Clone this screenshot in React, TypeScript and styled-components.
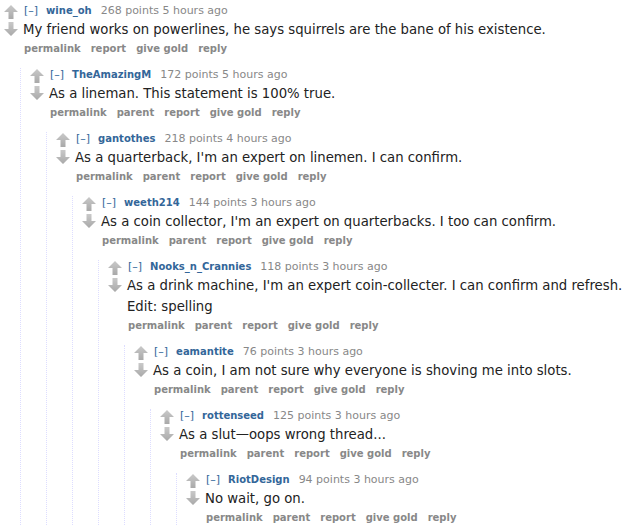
import React from "react";
import styled, { createGlobalStyle } from "styled-components";

const Global = createGlobalStyle`
  html, body { margin: 0; padding: 0; background: #fff; }
  body { font-family: "DejaVu Sans", Verdana, sans-serif; }
`;

type C = {
  author: string;
  points: number;
  age: string;
  body: string[];
  parent: boolean;
  child?: C;
};

const data: C = {
  author: "wine_oh",
  points: 268,
  age: "5 hours ago",
  body: ["My friend works on powerlines, he says squirrels are the bane of his existence."],
  parent: false,
  child: {
    author: "TheAmazingM",
    points: 172,
    age: "5 hours ago",
    body: ["As a lineman. This statement is 100% true."],
    parent: true,
    child: {
      author: "gantothes",
      points: 218,
      age: "4 hours ago",
      body: ["As a quarterback, I'm an expert on linemen. I can confirm."],
      parent: true,
      child: {
        author: "weeth214",
        points: 144,
        age: "3 hours ago",
        body: ["As a coin collector, I'm an expert on quarterbacks. I too can confirm."],
        parent: true,
        child: {
          author: "Nooks_n_Crannies",
          points: 118,
          age: "3 hours ago",
          body: [
            "As a drink machine, I'm an expert coin-collecter. I can confirm and refresh.",
            "Edit: spelling",
          ],
          parent: true,
          child: {
            author: "eamantite",
            points: 76,
            age: "3 hours ago",
            body: ["As a coin, I am not sure why everyone is shoving me into slots."],
            parent: true,
            child: {
              author: "rottenseed",
              points: 125,
              age: "3 hours ago",
              body: ["As a slut\u2014oops wrong thread..."],
              parent: true,
              child: {
                author: "RiotDesign",
                points: 94,
                age: "3 hours ago",
                body: ["No wait, go on."],
                parent: true,
              },
            },
          },
        },
      },
    },
  },
};

const Page = styled.div`
  padding-top: 4px;
  overflow: hidden;
  height: 526px;
`;

const CommentBox = styled.div``;

const Row = styled.div`
  display: flex;
  align-items: flex-start;
`;

const Midcol = styled.div`
  width: 14px;
  margin-left: 4px;
  margin-right: 5px;
  display: flex;
  flex-direction: column;
  gap: 3px;
  padding-top: 1px;
`;

const Entry = styled.div`
  flex: 1;
  min-width: 0;
`;

const Tagline = styled.div`
  font-size: 11px;
  line-height: 14px;
  height: 14px;
  color: #888;
  white-space: nowrap;
`;

const Expand = styled.span`
  color: #369;
  margin-left: 1px;
  margin-right: 8px;
`;

const Author = styled.span`
  color: #369;
  font-weight: bold;
  font-size: 10px;
  margin-right: 9px;
`;

const Body = styled.div`
  display: flow-root;
  font-size: 13.25px;
  color: #222;
  margin-top: 3px;
`;

const Para = styled.p`
  margin: 0 0 3px 0;
  line-height: 18px;
  white-space: nowrap;
`;

const Buttons = styled.ul`
  list-style: none;
  margin: 0;
  padding: 0 0 0 1px;
  display: flex;
  gap: 10px;
  font-size: 10px;
  line-height: 14px;
  height: 14px;
  font-weight: bold;
  color: #888;
`;

const Children = styled.div`
  margin-left: 20px;
  margin-top: 12px;
  border-left: 1px dotted #ddf;
  padding-left: 5px;
`;

const Arrow: React.FC<{ down?: boolean }> = ({ down }) => {
  const id = down ? "arrow-down-grad" : "arrow-up-grad";
  return (
    <svg
      width="14"
      height="14"
      viewBox="0 0 14 14"
      style={down ? { transform: "rotate(180deg)", display: "block" } : { display: "block" }}
    >
      <defs>
        <linearGradient id={id} x1="0" y1="0" x2="0" y2="1">
          <stop offset="0" stopColor={down ? "#a9a9a9" : "#c9c9c9"} />
          <stop offset="1" stopColor={down ? "#c9c9c9" : "#a9a9a9"} />
        </linearGradient>
      </defs>
      <path d="M7 0 L14 7 L9.5 7 L9.5 14 L4.5 14 L4.5 7 L0 7 Z" fill={`url(#${id})`} />
    </svg>
  );
};

const Comment: React.FC<{ c: C }> = ({ c }) => (
  <CommentBox>
    <Row>
      <Midcol>
        <Arrow />
        <Arrow down />
      </Midcol>
      <Entry>
        <Tagline>
          <Expand>[–]</Expand>
          <Author>{c.author}</Author>
          {c.points} points {c.age}
        </Tagline>
        <Body>
          {c.body.map((p, i) => (
            <Para key={i}>{p}</Para>
          ))}
        </Body>
        <Buttons>
          <li>permalink</li>
          {c.parent && <li>parent</li>}
          <li>report</li>
          <li>give gold</li>
          <li>reply</li>
        </Buttons>
      </Entry>
    </Row>
    {c.child && (
      <Children>
        <Comment c={c.child} />
      </Children>
    )}
  </CommentBox>
);

export default function App() {
  return (
    <>
      <Global />
      <Page>
        <Comment c={data} />
      </Page>
    </>
  );
}
